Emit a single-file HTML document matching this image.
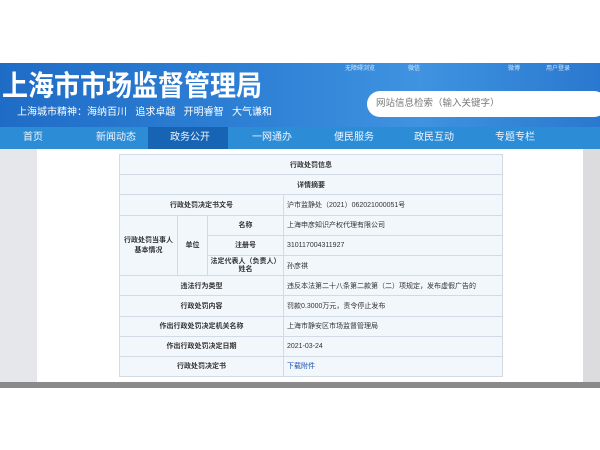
<!DOCTYPE html>
<html><head><meta charset="utf-8"><style>
*{margin:0;padding:0;box-sizing:border-box}
body{width:600px;height:450px;overflow:hidden;background:#fff;font-family:"Liberation Sans","Noto Sans CJK SC",sans-serif;position:relative}
.hd{position:absolute;left:0;top:63px;width:600px;height:65px;background:linear-gradient(90deg,#1f6cc7 0%,#2f82d6 45%,#3f93e0 70%,#2a78cf 100%)}
.title{position:absolute;left:2px;top:69px;color:#fff;font-size:26px;line-height:30px;font-weight:bold;transform:scaleY(1.1);transform-origin:left top;white-space:nowrap}
.sub{position:absolute;left:17px;top:107px;color:#fff;font-size:10px;line-height:12px;white-space:nowrap}
.top{position:absolute;top:63px;color:#d8e8f8;font-size:6px}
.search{position:absolute;left:367px;top:91px;width:240px;height:26px;border-radius:13px;background:#fff;color:#777;font-size:9.5px;line-height:26px;padding-left:9px}
.nav{position:absolute;left:0;top:127px;width:600px;height:22px;background:#2c8cd6}
.nav span{position:absolute;top:0;line-height:22px;color:#eef6ff;font-size:10px;white-space:nowrap}
.act{position:absolute;left:148px;top:127px;width:80px;height:22px;background:#1763b4}
.gl{position:absolute;left:0;top:149px;width:37px;height:233px;background:#e6e7ea}
.gr{position:absolute;left:583px;top:149px;width:17px;height:233px;background:#dcdcdf}
.gb{position:absolute;left:0;top:382px;width:600px;height:6px;background:#8a8a8a}
table{position:absolute;left:119px;top:154px;width:384px;border-collapse:collapse;font-size:7px;color:#333}
td{border:1px solid #d2dbe5;background:#f2f7fc;height:20.2px;text-align:center;font-weight:bold;padding:0}
td.v{text-align:left;font-weight:normal;padding-left:3px}
a{color:#1a4fb0}
</style></head><body>
<div class="hd"></div>
<div class="top" style="left:345px">无障碍浏览</div>
<div class="top" style="left:408px">微信</div>
<div class="top" style="left:508px">微博</div>
<div class="top" style="left:546px">用户登录</div>
<div class="title">上海市市场监督管理局</div>
<div class="sub">上海城市精神：海纳百川&nbsp;&nbsp;&nbsp;追求卓越&nbsp;&nbsp;&nbsp;开明睿智&nbsp;&nbsp;&nbsp;大气谦和</div>
<div class="search">网站信息检索（输入关键字）</div>
<div class="nav"></div>
<div class="act"></div>
<div class="nav" style="background:none">
<span style="left:23px">首页</span><span style="left:96px">新闻动态</span><span style="left:170px">政务公开</span><span style="left:252px">一网通办</span><span style="left:334px">便民服务</span><span style="left:414px">政民互动</span><span style="left:495px">专题专栏</span>
</div>
<div class="gl"></div><div class="gr"></div><div class="gb"></div>
<table>
<tr><td colspan="4">行政处罚信息</td></tr>
<tr><td colspan="4">详情摘要</td></tr>
<tr><td colspan="3">行政处罚决定书文号</td><td class="v">沪市监静处（2021）062021000051号</td></tr>
<tr><td rowspan="3" style="width:58px">行政处罚当事人<br>基本情况</td><td rowspan="3" style="width:30px">单位</td><td style="width:76px">名称</td><td class="v">上海申彦知识产权代理有限公司</td></tr>
<tr><td>注册号</td><td class="v">310117004311927</td></tr>
<tr><td style="line-height:8px">法定代表人（负责人）<br>姓名</td><td class="v">孙彦祺</td></tr>
<tr><td colspan="3">违法行为类型</td><td class="v">违反本法第二十八条第二款第（二）项规定，发布虚假广告的</td></tr>
<tr><td colspan="3">行政处罚内容</td><td class="v">罚款0.3000万元，责令停止发布</td></tr>
<tr><td colspan="3">作出行政处罚决定机关名称</td><td class="v">上海市静安区市场监督管理局</td></tr>
<tr><td colspan="3">作出行政处罚决定日期</td><td class="v">2021-03-24</td></tr>
<tr><td colspan="3">行政处罚决定书</td><td class="v"><a>下载附件</a></td></tr>
</table>
</body></html>
